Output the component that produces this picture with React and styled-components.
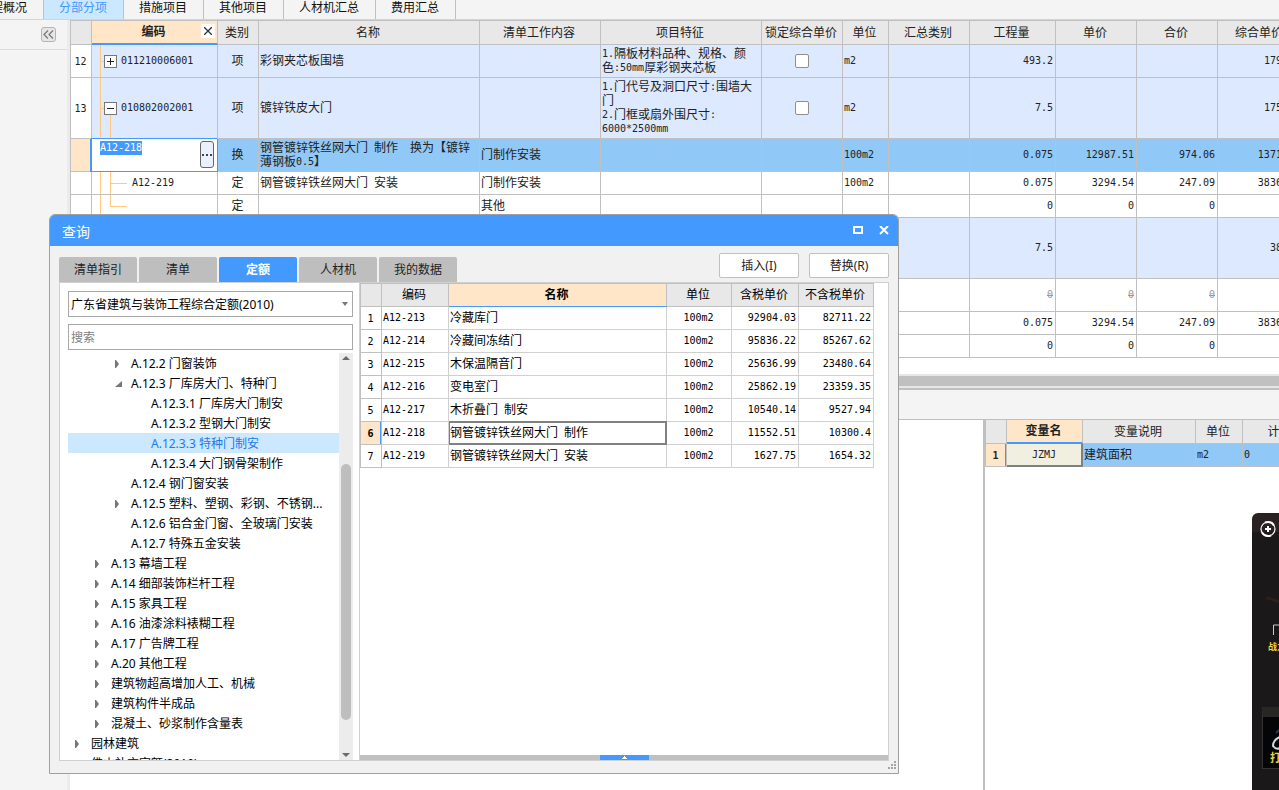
import React, { useEffect, useRef } from 'react';
import styled, { createGlobalStyle } from 'styled-components';

const BLUE = '#4499ff';
const LINE = '#c0c0c0';
const GUIDE = 'linear-gradient(#ffc97f, #ffc97f)';

const GlobalStyle = createGlobalStyle`
  * {
    box-sizing: border-box;
  }
  body {
    margin: 0;
    overflow: hidden;
    background: #fff;
    color: #222;
    font: 12px/14px 'Noto Sans', 'Noto Sans CJK SC', sans-serif;
  }
  button, input, select {
    margin: 0;
    padding: 0;
    border: 0;
    border-radius: 0;
    background: none;
    color: inherit;
    font: inherit;
  }
`;

const Page = styled.div`
  position: relative;
  display: flex;
  flex-direction: column;
  height: 100vh;
  overflow: hidden;
`;

const TopTabs = styled.nav`
  display: flex;
  flex: none;
  height: 20px;
  margin-left: -36px;
  background: #f4f4f4;
  border-bottom: 1px solid #d4d4d4;
`;

const TopTab = styled.button`
  height: 19px;
  padding: 0 16px 4px 15px;
  border-right: 1px solid ${LINE};
  white-space: nowrap;
  line-height: 14px;
  color: ${props => (props.$active ? BLUE : '#111')};
  background: ${props => (props.$active ? '#cce8ff' : 'transparent')};
`;

const Workspace = styled.div`
  display: flex;
  flex: 1;
  min-height: 0;
`;

const Sidebar = styled.aside`
  flex: none;
  width: 70px;
  background: #f4f4f4;
  border-right: 3px solid #ebebeb;
`;

const SidebarHead = styled.div`
  display: flex;
  justify-content: flex-end;
  align-items: center;
  height: 30px;
  padding-right: 11px;
  border-bottom: 1px solid #dcdcdc;
`;

const CollapseButton = styled.button`
  display: flex;
  align-items: center;
  justify-content: center;
  width: 15px;
  height: 15px;
  border: 1px solid #b4b4b4;
  border-radius: 3px;
  background: #e6e6e6;
`;

const Main = styled.main`
  display: flex;
  flex-direction: column;
  flex: 1;
  min-width: 0;
`;

const GridScroller = styled.div`
  flex: none;
  overflow: hidden;
  padding-bottom: ${props => props.$gap || 0}px;
`;

const Grid = styled.table`
  table-layout: fixed;
  width: ${props => props.$width}px;
  border-spacing: 0;
  border-left: 1px solid ${LINE};
  border-top: ${props => (props.$topLine ? `1px solid ${LINE}` : '0')};
  font-family: 'Noto Sans CJK SC', sans-serif;
  color: ${props => props.$color || '#222'};
`;

const Row = styled.tr`
  height: ${props => props.$height}px;
  background: ${props => props.$fill || '#fff'};
`;

const Head = styled.th`
  padding: 0 2px 2px 0;
  border-right: 1px solid ${LINE};
  border-bottom: ${props => (props.$active ? `${props.$bar || 2}px solid ${BLUE}` : `1px solid ${LINE}`)};
  background: ${props => (props.$active ? '#ffe6c8' : '#e8e8e8')};
  font-weight: ${props => (props.$active ? 'bold' : 'normal')};
  white-space: nowrap;
`;

const HeadInner = styled.div`
  display: grid;
  grid-template-columns: 14px 1fr 14px;
  align-items: center;
`;

const HeadClose = styled.button`
  display: flex;
  align-items: center;
  justify-content: center;
  width: 14px;
  height: 14px;
  background: #fff;
`;

const Cell = styled.td`
  padding: 0 2px 2px 1px;
  border-right: 1px solid ${props => props.$line || LINE};
  border-bottom: 1px solid ${props => props.$line || LINE};
  text-align: ${props => props.$align || 'left'};
  white-space: pre;
  overflow: hidden;
  color: ${props => (props.$void ? '#999' : 'inherit')};
  span {
    text-decoration: ${props => (props.$void ? 'line-through' : 'none')};
  }
`;

const RowNumber = styled(Cell)`
  padding-bottom: 0;
  border-color: ${LINE};
  text-align: center;
  font-weight: ${props => (props.$active ? 'bold' : 'normal')};
  background: ${props => (props.$active ? '#ffe6c8' : '#fff')};
  box-shadow: ${props => (props.$active ? `inset -1px 0 0 ${BLUE}` : 'none')};
`;

const TreeCell = styled(Cell)`
  padding: 0 0 0 ${props => (props.$kind === 'parent' || props.$kind === 'open' ? 12 : 40)}px;
  background-repeat: no-repeat;
  background-image: ${GUIDE}, ${GUIDE}, ${GUIDE};
  background-position: ${props =>
    ({
      parent: '8px 0, 8px 50%, 0 0',
      open: '8px 0, 8px 50%, 18px 100%',
      child: '8px 0, 18px 50%, 18px 0',
      last: '8px 0, 18px 50%, 18px 0',
    }[props.$kind])};
  background-size: ${props =>
    ({
      parent: '1px 100%, 4px 1px, 0 0',
      open: '1px 100%, 4px 1px, 1px 50%',
      child: '1px 100%, 17px 1px, 1px 100%',
      last: '1px 100%, 17px 1px, 1px 50%',
    }[props.$kind])};
`;

const TreeLabel = styled.div`
  display: flex;
  align-items: center;
  gap: 4px;
`;

const TreeCode = styled.div`
  padding-bottom: 2px;
`;

const Toggle = styled.button`
  display: flex;
  width: 13px;
  height: 13px;
  align-items: center;
  justify-content: center;
  border: 1px solid #777;
  background: #fff;
`;

const EditCell = styled(Cell)`
  padding: 2px 3px 2px 6px;
  background: #fff;
  border-color: ${BLUE};
  box-shadow: -1px -1px 0 ${BLUE}, -2px 0 0 ${BLUE};
`;

const Editor = styled.div`
  display: flex;
  align-items: flex-start;
  height: 28px;
`;

const EditInput = styled.input`
  flex: 1;
  min-width: 0;
  height: 14px;
  margin-left: 2px;
  outline: 0;
  font: 10px/14px 'DejaVu Sans Mono', monospace;
  &::selection {
    background: ${BLUE};
    color: #fff;
  }
`;

const MoreButton = styled.button`
  display: flex;
  align-items: center;
  justify-content: center;
  width: 14px;
  height: 27px;
  border: 1px solid #666;
  border-radius: 3px;
  background: #eaf1fc;
`;

const Tick = styled.input`
  display: block;
  appearance: none;
  width: 14px;
  height: 14px;
  margin: 2px auto 0;
  border: 1px solid #8f8f8f;
  border-radius: 2px;
  background: #fff;
`;

const Latin = styled.span`
  font-family: 'DejaVu Sans Mono', monospace;
  font-size: 10px;
  line-height: 1;
  vertical-align: 1px;
`;

const FocusCell = styled(Cell)`
  background: #f0efe0;
  box-shadow: inset -1px -1px 0 #808080;
  border-color: #808080;
`;

const OutlinedCell = styled(Cell)`
  box-shadow: inset 0 0 0 1px #808080, 0 -1px 0 #808080;
  border-color: #808080;
`;

const ScrollTrack = styled.div`
  flex: none;
  height: 14px;
  padding: 2px 0;
  background: #e6e6e6;
`;

const ScrollThumb = styled.div`
  height: 10px;
  background: ${LINE};
`;

const SubToolbar = styled.div`
  flex: none;
  height: 32px;
  background: #f4f4f4;
  border-top: 2px solid ${LINE};
  border-bottom: 1px solid ${LINE};
`;

const LowerPanes = styled.div`
  display: flex;
  flex: 1;
  justify-content: flex-end;
  min-height: 0;
`;

const VariablePane = styled.section`
  width: 296px;
  border-left: 2px solid ${LINE};
  overflow: hidden;
`;

const Dialog = styled.section`
  position: absolute;
  left: 49px;
  top: 214px;
  display: flex;
  flex-direction: column;
  width: 850px;
  height: 560px;
  border: 1px solid #a0a0a0;
  border-radius: 6px 6px 0 0;
  background: #f1f1f1;
  overflow: hidden;
`;

const TitleBar = styled.header`
  display: flex;
  align-items: center;
  flex: none;
  gap: 16px;
  height: 31px;
  padding: 0 9px 0 12px;
  background: ${BLUE};
  color: #fff;
  h2 {
    flex: 1;
    margin: 0;
    padding-top: 2px;
    font-size: 14px;
    font-weight: normal;
    line-height: 20px;
  }
`;

const TitleButton = styled.button`
  display: flex;
  width: 10px;
  height: 10px;
`;

const DialogBar = styled.div`
  display: flex;
  align-items: flex-end;
  flex: none;
  gap: 2px;
  height: 36px;
  padding: 0 9px;
`;

const DialogTab = styled.button`
  width: 78px;
  height: 25px;
  border-radius: 2px 2px 0 0;
  color: ${props => (props.$active ? '#fff' : '#222')};
  font-weight: ${props => (props.$active ? 'bold' : 'normal')};
  background: ${props => (props.$active ? BLUE : '#bebebe')};
`;

const Actions = styled.div`
  display: flex;
  gap: 10px;
  margin-left: auto;
  padding-bottom: 4px;
`;

const ActionButton = styled.button`
  width: 80px;
  height: 25px;
  border: 1px solid ${LINE};
  border-radius: 2px;
  background: #fff;
`;

const DialogBody = styled.div`
  display: flex;
  flex: 1;
  min-height: 0;
  margin: 0 9px;
  border: 1px solid #d0d0d0;
  background: #fff;
`;

const DialogFoot = styled.footer`
  display: flex;
  justify-content: flex-end;
  flex: none;
  height: 12px;
  padding-right: 2px;
`;

const CatalogPane = styled.div`
  display: flex;
  flex-direction: column;
  flex: none;
  width: 300px;
  padding: 8px 6px 0 8px;
  border-right: 1px solid #d0d0d0;
`;

const SelectBox = styled.label`
  display: flex;
  align-items: center;
  flex: none;
  height: 26px;
  padding-right: 4px;
  border: 1px solid #a8a8a8;
  color: #000;
  select {
    flex: 1;
    height: 24px;
    padding: 2px 0 0 2px;
    appearance: none;
    outline: 0;
  }
`;

const SearchInput = styled.input`
  flex: none;
  height: 26px;
  margin: 7px 0 3px;
  padding: 0 2px;
  border: 1px solid #a8a8a8;
  &::placeholder {
    color: #808080;
    opacity: 1;
  }
`;

const TreeBox = styled.div`
  display: flex;
  flex: 1;
  min-height: 0;
`;

const Tree = styled.ul`
  flex: 1;
  min-width: 0;
  margin: 0;
  padding: 0;
  overflow: hidden;
  list-style: none;
`;

const TreeItem = styled.li`
  display: flex;
  align-items: center;
  gap: 8px;
  height: 20px;
  padding: 2px 0 0 ${props => props.$level * 20 + 7}px;
  white-space: nowrap;
  color: ${props => (props.$active ? '#1a78f0' : '#000')};
  background: ${props => (props.$active ? '#cce8ff' : 'transparent')};
  svg {
    flex: none;
  }
`;

const VerticalBar = styled.div`
  display: flex;
  flex-direction: column;
  align-items: center;
  width: 14px;
  padding: 3px 0;
  background: #ececec;
`;

const VerticalThumb = styled.div`
  width: 10px;
  height: 256px;
  margin: 104px 0 auto;
  border-radius: 5px;
  background: #bebebe;
`;

const ResultPane = styled.div`
  display: flex;
  flex-direction: column;
  justify-content: space-between;
  flex: 1;
  min-width: 0;
`;

const SplitBar = styled.div`
  display: flex;
  justify-content: center;
  height: 5px;
  background: ${LINE};
`;

const SplitHandle = styled.button`
  display: flex;
  justify-content: center;
  width: 49px;
  height: 5px;
  background: ${BLUE};
`;

const Promo = styled.aside`
  position: absolute;
  right: 0;
  bottom: 0;
  display: flex;
  flex-direction: column;
  width: 27px;
  height: 277px;
  border-top-left-radius: 6px;
  background: linear-gradient(#2a2123 0 18px, #1a1819 20px);
  color: #e8d648;
  overflow: hidden;
`;

const PromoArt = styled.svg`
  flex: none;
  display: block;
`;

const PromoText = styled.strong`
  height: 14px;
  padding-left: 16px;
  font-size: 9px;
  white-space: nowrap;
`;

const PromoCard = styled.div`
  display: flex;
  flex-direction: column;
  margin: 53px 0 0 10px;
  height: 62px;
  border: 1px solid #333;
  border-top: 10px solid #282726;
  border-right: 0;
  background: #050508;
  font-size: 11px;
  font-weight: bold;
  white-space: nowrap;
  span {
    padding-left: 7px;
  }
`;

const billColumns = [
  { title: '', width: 21 },
  { title: '编码', width: 126 },
  { title: '类别', width: 41 },
  { title: '名称', width: 221 },
  { title: '清单工作内容', width: 121 },
  { title: '项目特征', width: 161 },
  { title: '锁定综合单价', width: 81 },
  { title: '单位', width: 46 },
  { title: '汇总类别', width: 81 },
  { title: '工程量', width: 86 },
  { title: '单价', width: 81 },
  { title: '合价', width: 81 },
  { title: '综合单价', width: 85 },
];

const billRows = [
  {
    no: '12', height: 33, kind: 'parent', code: '011210006001', type: '项', name: '彩钢夹芯板围墙',
    feature: '1.隔板材料品种、规格、颜\n色:50mm厚彩钢夹芯板', lock: true, unit: 'm2',
    qty: '493.2', total: '179.42', fill: '#dce9ff',
  },
  {
    no: '13', height: 61, kind: 'open', code: '010802002001', type: '项', name: '镀锌铁皮大门',
    feature: '1.门代号及洞口尺寸:围墙大\n门\n2.门框或扇外围尺寸:\n6000*2500mm', lock: true, unit: 'm2',
    qty: '7.5', total: '175.51', fill: '#dce9ff',
  },
  {
    height: 33, kind: 'edit', code: 'A12-218', type: '换',
    name: '钢管镀锌铁丝网大门 制作  换为【镀锌\n薄钢板0.5】', work: '门制作安装', unit: '100m2',
    qty: '0.075', price: '12987.51', amount: '974.06', total: '13715.2', fill: '#90c8f8',
  },
  {
    height: 23, kind: 'child', code: 'A12-219', type: '定', name: '钢管镀锌铁丝网大门 安装',
    work: '门制作安装', unit: '100m2', qty: '0.075', price: '3294.54', amount: '247.09', total: '3836.18',
  },
  { height: 23, kind: 'last', type: '定', work: '其他', qty: '0', price: '0', amount: '0', total: '0' },
  { height: 61, kind: 'open', qty: '7.5', total: '38.36', fill: '#dce9ff' },
  { height: 33, kind: 'child', qty: '0', price: '0', amount: '0', voided: true },
  { height: 23, kind: 'child', qty: '0.075', price: '3294.54', amount: '247.09', total: '3836.18' },
  { height: 23, kind: 'last', qty: '0', price: '0', amount: '0', total: '0' },
];

const quotaColumns = [
  { title: '', width: 21 },
  { title: '编码', width: 67 },
  { title: '名称', width: 218 },
  { title: '单位', width: 65 },
  { title: '含税单价', width: 67 },
  { title: '不含税单价', width: 75 },
];

const quotaRows = [
  ['A12-213', '冷藏库门', '100m2', '92904.03', '82711.22'],
  ['A12-214', '冷藏间冻结门', '100m2', '95836.22', '85267.62'],
  ['A12-215', '木保温隔音门', '100m2', '25636.99', '23480.64'],
  ['A12-216', '变电室门', '100m2', '25862.19', '23359.35'],
  ['A12-217', '木折叠门 制安', '100m2', '10540.14', '9527.94'],
  ['A12-218', '钢管镀锌铁丝网大门 制作', '100m2', '11552.51', '10300.4'],
  ['A12-219', '钢管镀锌铁丝网大门 安装', '100m2', '1627.75', '1654.32'],
];

const variableColumns = [
  { title: '', width: 21 },
  { title: '变量名', width: 76 },
  { title: '变量说明', width: 113 },
  { title: '单位', width: 47 },
  { title: '计算式', width: 88 },
];

const catalog = [
  { level: 2, text: 'A.12.2 门窗装饰', arrow: 'closed' },
  { level: 2, text: 'A.12.3 厂库房大门、特种门', arrow: 'open' },
  { level: 3, text: 'A.12.3.1 厂库房大门制安' },
  { level: 3, text: 'A.12.3.2 型钢大门制安' },
  { level: 3, text: 'A.12.3.3 特种门制安', active: true },
  { level: 3, text: 'A.12.3.4 大门钢骨架制作' },
  { level: 2, text: 'A.12.4 钢门窗安装' },
  { level: 2, text: 'A.12.5 塑料、塑钢、彩钢、不锈钢...', arrow: 'closed' },
  { level: 2, text: 'A.12.6 铝合金门窗、全玻璃门安装' },
  { level: 2, text: 'A.12.7 特殊五金安装' },
  { level: 1, text: 'A.13 幕墙工程', arrow: 'closed' },
  { level: 1, text: 'A.14 细部装饰栏杆工程', arrow: 'closed' },
  { level: 1, text: 'A.15 家具工程', arrow: 'closed' },
  { level: 1, text: 'A.16 油漆涂料裱糊工程', arrow: 'closed' },
  { level: 1, text: 'A.17 广告牌工程', arrow: 'closed' },
  { level: 1, text: 'A.20 其他工程', arrow: 'closed' },
  { level: 1, text: '建筑物超高增加人工、机械', arrow: 'closed' },
  { level: 1, text: '建筑构件半成品', arrow: 'closed' },
  { level: 1, text: '混凝土、砂浆制作含量表', arrow: 'closed' },
  { level: 0, text: '园林建筑', arrow: 'closed' },
  { level: 0, text: '佛山补充定额(2010)' },
];

// Latin runs use a half-width face so that two characters equal one ideograph
function Mixed({ children }) {
  return String(children || '')
    .split(/([\x20-\x7e]+)/)
    .map((part, i) => (i % 2 ? <Latin key={i}>{part}</Latin> : part));
}

function Columns({ columns }) {
  return (
    <colgroup>
      {columns.map((column, i) => (
        <col key={i} style={{ width: column.width }} />
      ))}
    </colgroup>
  );
}

const widthOf = columns => columns.reduce((sum, column) => sum + column.width, 1);

function TreeArrow({ state }) {
  return (
    <svg width="8" height="8" viewBox="0 0 8 8" fill="#767676" aria-hidden="true">
      {state === 'closed' && <path d="M0 0h1l3 4-3 4H0z" />}
      {state === 'open' && <path d="M7 1v6H0z" />}
    </svg>
  );
}

function CodeEditor({ value }) {
  const input = useRef(null);
  useEffect(() => {
    input.current.focus();
    input.current.select();
  }, []);

  return (
    <Editor>
      <EditInput ref={input} defaultValue={value} aria-label="编码" />
      <MoreButton aria-label="更多">
        <svg width="10" height="2" viewBox="0 0 10 2" fill="#444" aria-hidden="true">
          <path d="M0 0h2v2H0zM4 0h2v2H4zM8 0h2v2H8z" />
        </svg>
      </MoreButton>
    </Editor>
  );
}

function CodeCell({ row }) {
  if (row.kind === 'edit') {
    return (
      <EditCell>
        <CodeEditor value={row.code} />
      </EditCell>
    );
  }
  return (
    <TreeCell $kind={row.kind}>
      <TreeLabel>
        {(row.kind === 'parent' || row.kind === 'open') && (
          <Toggle aria-label={row.kind === 'open' ? '折叠' : '展开'}>
            <svg width="9" height="9" viewBox="0 0 9 9" fill="#222" aria-hidden="true">
              <path d={row.kind === 'open' ? 'M1 4h7v1H1z' : 'M1 4h3V1h1v3h3v1H5v3H4V5H1z'} />
            </svg>
          </Toggle>
        )}
        <TreeCode>
          <Mixed>{row.code}</Mixed>
        </TreeCode>
      </TreeLabel>
    </TreeCell>
  );
}

function BillGrid() {
  return (
    <GridScroller $gap={16}>
      <Grid $width={widthOf(billColumns)} $topLine>
        <Columns columns={billColumns} />
        <thead>
          <Row $height={24}>
            {billColumns.map((column, i) => (
              <Head key={i} $active={i === 1}>
                {i === 1 ? (
                  <HeadInner>
                    <i />
                    {column.title}
                    <HeadClose aria-label="关闭">
                      <svg width="8" height="8" viewBox="0 0 8 8" stroke="#333" strokeWidth="1.3" aria-hidden="true">
                        <path d="M0 0l8 8M8 0L0 8" />
                      </svg>
                    </HeadClose>
                  </HeadInner>
                ) : (
                  column.title
                )}
              </Head>
            ))}
          </Row>
        </thead>
        <tbody>
          {billRows.map((row, i) => (
            <Row key={i} $height={row.height} $fill={row.fill}>
              <RowNumber $active={row.kind === 'edit'}>
                <Mixed>{row.no}</Mixed>
              </RowNumber>
              <CodeCell row={row} />
              <Cell $align="center">{row.type}</Cell>
              <Cell><Mixed>{row.name}</Mixed></Cell>
              <Cell>{row.work}</Cell>
              <Cell><Mixed>{row.feature}</Mixed></Cell>
              <Cell>{row.lock && <Tick type="checkbox" aria-label="锁定综合单价" />}</Cell>
              <Cell><Mixed>{row.unit}</Mixed></Cell>
              <Cell />
              <Cell $align="right" $void={row.voided}><Mixed>{row.qty}</Mixed></Cell>
              <Cell $align="right" $void={row.voided}><Mixed>{row.price}</Mixed></Cell>
              <Cell $align="right" $void={row.voided}><Mixed>{row.amount}</Mixed></Cell>
              <Cell $align="right"><Mixed>{row.total}</Mixed></Cell>
            </Row>
          ))}
        </tbody>
      </Grid>
    </GridScroller>
  );
}

function VariableGrid() {
  return (
    <Grid $width={widthOf(variableColumns)}>
      <Columns columns={variableColumns} />
      <thead>
        <Row $height={24}>
          {variableColumns.map((column, i) => (
            <Head key={i} $active={i === 1}>{column.title}</Head>
          ))}
        </Row>
      </thead>
      <tbody>
        <Row $height={23} $fill="#90c8f8">
          <RowNumber $active><Mixed>1</Mixed></RowNumber>
          <FocusCell $align="center"><Mixed>JZMJ</Mixed></FocusCell>
          <Cell>建筑面积</Cell>
          <Cell><Mixed>m2</Mixed></Cell>
          <Cell><Mixed>0</Mixed></Cell>
        </Row>
      </tbody>
    </Grid>
  );
}

function QuotaGrid() {
  return (
    <Grid $width={widthOf(quotaColumns)} $topLine $color="#000">
      <Columns columns={quotaColumns} />
      <thead>
        <Row $height={23}>
          {quotaColumns.map((column, i) => (
            <Head key={i} $active={i === 2} $bar={1}>{column.title}</Head>
          ))}
        </Row>
      </thead>
      <tbody>
        {quotaRows.map(([code, name, unit, taxed, untaxed], i) => {
          const NameCell = i === 5 ? OutlinedCell : Cell;
          return (
            <Row key={code} $height={23}>
              <RowNumber $active={i === 5}><Mixed>{i + 1}</Mixed></RowNumber>
              <Cell $line="#d0d0d0"><Mixed>{code}</Mixed></Cell>
              <NameCell $line="#d0d0d0"><Mixed>{name}</Mixed></NameCell>
              <Cell $line="#d0d0d0" $align="center"><Mixed>{unit}</Mixed></Cell>
              <Cell $line="#d0d0d0" $align="right"><Mixed>{taxed}</Mixed></Cell>
              <Cell $line="#d0d0d0" $align="right"><Mixed>{untaxed}</Mixed></Cell>
            </Row>
          );
        })}
      </tbody>
    </Grid>
  );
}

function QueryDialog() {
  return (
    <Dialog role="dialog" aria-label="查询">
      <TitleBar>
        <h2>查询</h2>
        <TitleButton aria-label="最大化">
          <svg width="10" height="10" viewBox="0 0 10 10" fill="none" stroke="#fff" strokeWidth="2" aria-hidden="true">
            <path d="M1 1h8v6H1z" />
          </svg>
        </TitleButton>
        <TitleButton aria-label="关闭">
          <svg width="10" height="10" viewBox="0 0 10 10" stroke="#fff" strokeWidth="2" aria-hidden="true">
            <path d="M1 0l8 8M9 0L1 8" />
          </svg>
        </TitleButton>
      </TitleBar>
      <DialogBar>
        {['清单指引', '清单', '定额', '人材机', '我的数据'].map(name => (
          <DialogTab key={name} $active={name === '定额'}>{name}</DialogTab>
        ))}
        <Actions>
          <ActionButton>插入(I)</ActionButton>
          <ActionButton>替换(R)</ActionButton>
        </Actions>
      </DialogBar>
      <DialogBody>
        <CatalogPane>
          <SelectBox>
            <select aria-label="定额库">
              <option>广东省建筑与装饰工程综合定额(2010)</option>
            </select>
            <svg width="6" height="4" viewBox="0 0 6 4" fill="#777" aria-hidden="true">
              <path d="M0 0h6L3 4z" />
            </svg>
          </SelectBox>
          <SearchInput placeholder="搜索" aria-label="搜索" />
          <TreeBox>
            <Tree>
              {catalog.map(item => (
                <TreeItem key={item.text} $level={item.level} $active={item.active}>
                  <TreeArrow state={item.arrow} />
                  {item.text}
                </TreeItem>
              ))}
            </Tree>
            <VerticalBar>
              <svg width="8" height="4" viewBox="0 0 8 4" fill="#6a6a74" aria-hidden="true">
                <path d="M4 0l4 4H0z" />
              </svg>
              <VerticalThumb />
              <svg width="8" height="4" viewBox="0 0 8 4" fill="#6a6a74" aria-hidden="true">
                <path d="M0 0h8L4 4z" />
              </svg>
            </VerticalBar>
          </TreeBox>
        </CatalogPane>
        <ResultPane>
          <QuotaGrid />
          <SplitBar>
            <SplitHandle aria-label="展开">
              <svg width="5" height="4" viewBox="0 0 5 4" fill="#fff" aria-hidden="true">
                <path d="M2 1h1v1h1v1h1v1H0V3h1V2h1z" />
              </svg>
            </SplitHandle>
          </SplitBar>
        </ResultPane>
      </DialogBody>
      <DialogFoot>
        <svg width="8" height="8" viewBox="0 0 8 8" fill="#a4a4a4" aria-hidden="true">
          <path d="M6 0h2v2H6zM3 3h2v2H3zM6 3h2v2H6zM0 6h2v2H0zM3 6h2v2H3zM6 6h2v2H6z" />
        </svg>
      </DialogFoot>
    </Dialog>
  );
}

function PromoPanel() {
  return (
    <Promo>
      <PromoArt width="27" height="127" viewBox="0 0 27 127" fill="none">
        <circle cx="16" cy="16" r="7" stroke="#fff" strokeWidth="1.2" />
        <path d="M13 9.500q6-2 9 3M19 22.500q-6 2-9-3" stroke="#fff" strokeWidth="2" />
        <path d="M16 13v6M13 16h6" stroke="#fff" strokeWidth="2" />
        <path d="M14 85q8 1 13 4" stroke="#2c2018" strokeWidth="3" />
        <path d="M21.500 122v-10H27" stroke="#ccc" />
      </PromoArt>
      <PromoText>战之</PromoText>
      <PromoCard>
        <PromoArt width="17" height="34" viewBox="0 0 17 34" fill="none">
          <path d="M17 12l-4 4" stroke="#26374d" strokeWidth="2" />
          <path d="M17 20q-7 3-7 9q3 4 7 2" stroke="#d6dade" strokeWidth="2" />
        </PromoArt>
        <span>打</span>
      </PromoCard>
    </Promo>
  );
}

export default function App() {
  return (
    <Page>
      <GlobalStyle />
      <TopTabs>
        {['工程概况', '分部分项', '措施项目', '其他项目', '人材机汇总', '费用汇总'].map(name => (
          <TopTab key={name} $active={name === '分部分项'}>{name}</TopTab>
        ))}
      </TopTabs>
      <Workspace>
        <Sidebar>
          <SidebarHead>
            <CollapseButton aria-label="收起">
              <svg width="11" height="9" viewBox="0 0 11 9" fill="none" stroke="#777" strokeWidth="1.2" aria-hidden="true">
                <path d="M5 0.500L1 4.500l4 4M10 0.500L6 4.500l4 4" />
              </svg>
            </CollapseButton>
          </SidebarHead>
        </Sidebar>
        <Main>
          <BillGrid />
          <ScrollTrack>
            <ScrollThumb />
          </ScrollTrack>
          <SubToolbar />
          <LowerPanes>
            <VariablePane>
              <VariableGrid />
            </VariablePane>
          </LowerPanes>
        </Main>
      </Workspace>
      <QueryDialog />
      <PromoPanel />
    </Page>
  );
}
